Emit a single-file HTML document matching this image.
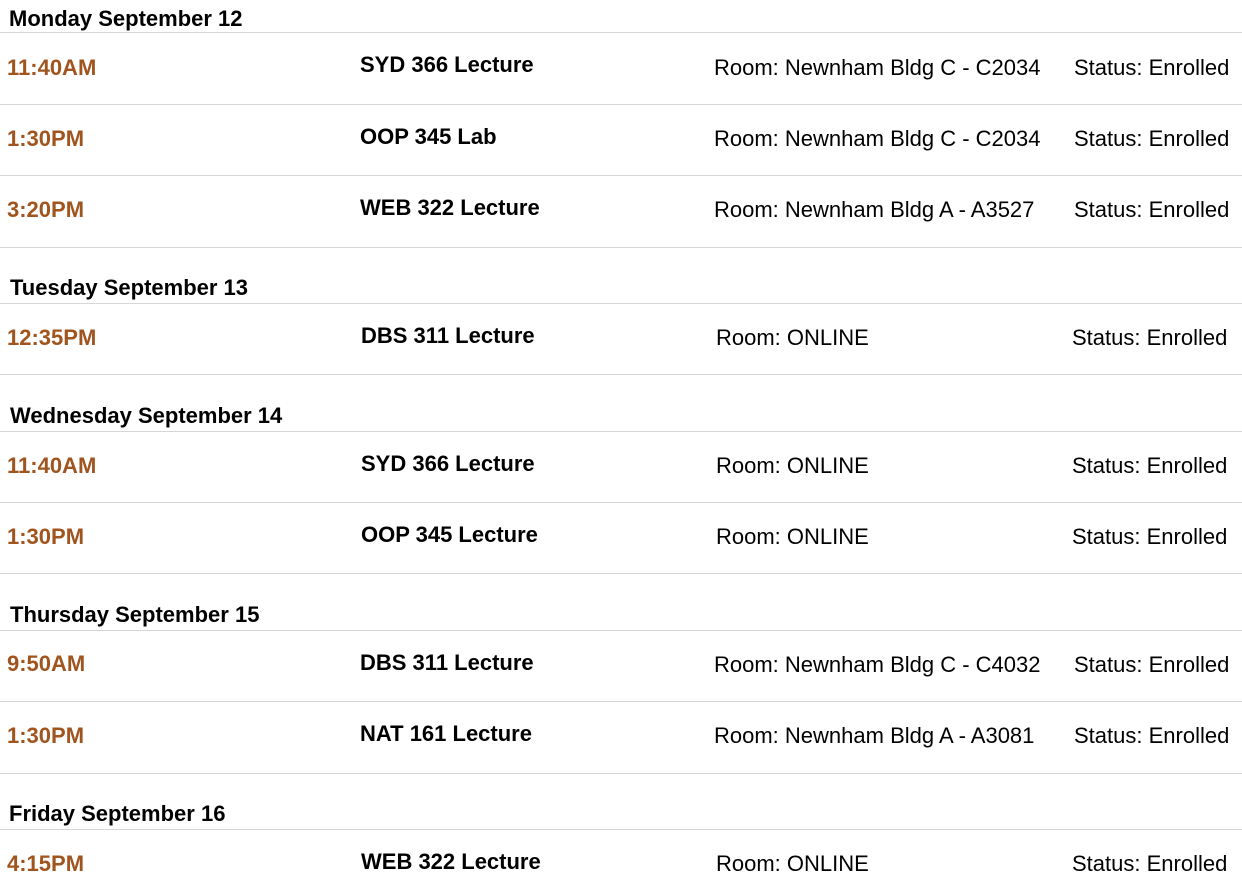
<!DOCTYPE html>
<html><head><meta charset="utf-8"><style>
body{margin:0;width:1242px;height:893px;background:#fff;position:relative;overflow:hidden;font-family:"Liberation Sans",Arial,sans-serif;}
div{position:absolute;white-space:nowrap;line-height:24px;height:24px;}
.h,.t,.c,.r{margin-top:1px;}
.h{font-weight:bold;font-size:22px;color:#000;}
.t{font-weight:bold;font-size:22px;color:#a0541e;left:7px;}
.c{font-weight:bold;font-size:22px;color:#000;}
.r{font-size:22px;color:#000;}
.l{height:1px;left:0;width:1242px;background:#d6d6d6;}
</style></head><body>
<div class="h" style="left:9px;top:6px">Monday September 12</div>
<div class="l" style="top:32px"></div>
<div class="t" style="top:55px">11:40AM</div><div class="c" style="left:360px;top:52px">SYD 366 Lecture</div><div class="r" style="left:714px;top:55px">Room: Newnham Bldg C - C2034</div><div class="r" style="left:1074px;top:55px">Status: Enrolled</div>
<div class="l" style="top:104px"></div>
<div class="t" style="top:126px">1:30PM</div><div class="c" style="left:360px;top:124px">OOP 345 Lab</div><div class="r" style="left:714px;top:126px">Room: Newnham Bldg C - C2034</div><div class="r" style="left:1074px;top:126px">Status: Enrolled</div>
<div class="l" style="top:175px"></div>
<div class="t" style="top:197px">3:20PM</div><div class="c" style="left:360px;top:195px">WEB 322 Lecture</div><div class="r" style="left:714px;top:197px">Room: Newnham Bldg A - A3527</div><div class="r" style="left:1074px;top:197px">Status: Enrolled</div>
<div class="l" style="top:247px"></div>
<div class="h" style="left:10px;top:275px">Tuesday September 13</div>
<div class="l" style="top:303px"></div>
<div class="t" style="top:325px">12:35PM</div><div class="c" style="left:361px;top:323px">DBS 311 Lecture</div><div class="r" style="left:716px;top:325px">Room: ONLINE</div><div class="r" style="left:1072px;top:325px">Status: Enrolled</div>
<div class="l" style="top:374px"></div>
<div class="h" style="left:10px;top:403px">Wednesday September 14</div>
<div class="l" style="top:431px"></div>
<div class="t" style="top:453px">11:40AM</div><div class="c" style="left:361px;top:451px">SYD 366 Lecture</div><div class="r" style="left:716px;top:453px">Room: ONLINE</div><div class="r" style="left:1072px;top:453px">Status: Enrolled</div>
<div class="l" style="top:502px"></div>
<div class="t" style="top:524px">1:30PM</div><div class="c" style="left:361px;top:522px">OOP 345 Lecture</div><div class="r" style="left:716px;top:524px">Room: ONLINE</div><div class="r" style="left:1072px;top:524px">Status: Enrolled</div>
<div class="l" style="top:573px"></div>
<div class="h" style="left:10px;top:602px">Thursday September 15</div>
<div class="l" style="top:630px"></div>
<div class="t" style="top:651px">9:50AM</div><div class="c" style="left:360px;top:650px">DBS 311 Lecture</div><div class="r" style="left:714px;top:652px">Room: Newnham Bldg C - C4032</div><div class="r" style="left:1074px;top:652px">Status: Enrolled</div>
<div class="l" style="top:701px"></div>
<div class="t" style="top:723px">1:30PM</div><div class="c" style="left:360px;top:721px">NAT 161 Lecture</div><div class="r" style="left:714px;top:723px">Room: Newnham Bldg A - A3081</div><div class="r" style="left:1074px;top:723px">Status: Enrolled</div>
<div class="l" style="top:773px"></div>
<div class="h" style="left:9px;top:801px">Friday September 16</div>
<div class="l" style="top:829px"></div>
<div class="t" style="top:851px">4:15PM</div><div class="c" style="left:361px;top:849px">WEB 322 Lecture</div><div class="r" style="left:716px;top:851px">Room: ONLINE</div><div class="r" style="left:1072px;top:851px">Status: Enrolled</div>
</body></html>
